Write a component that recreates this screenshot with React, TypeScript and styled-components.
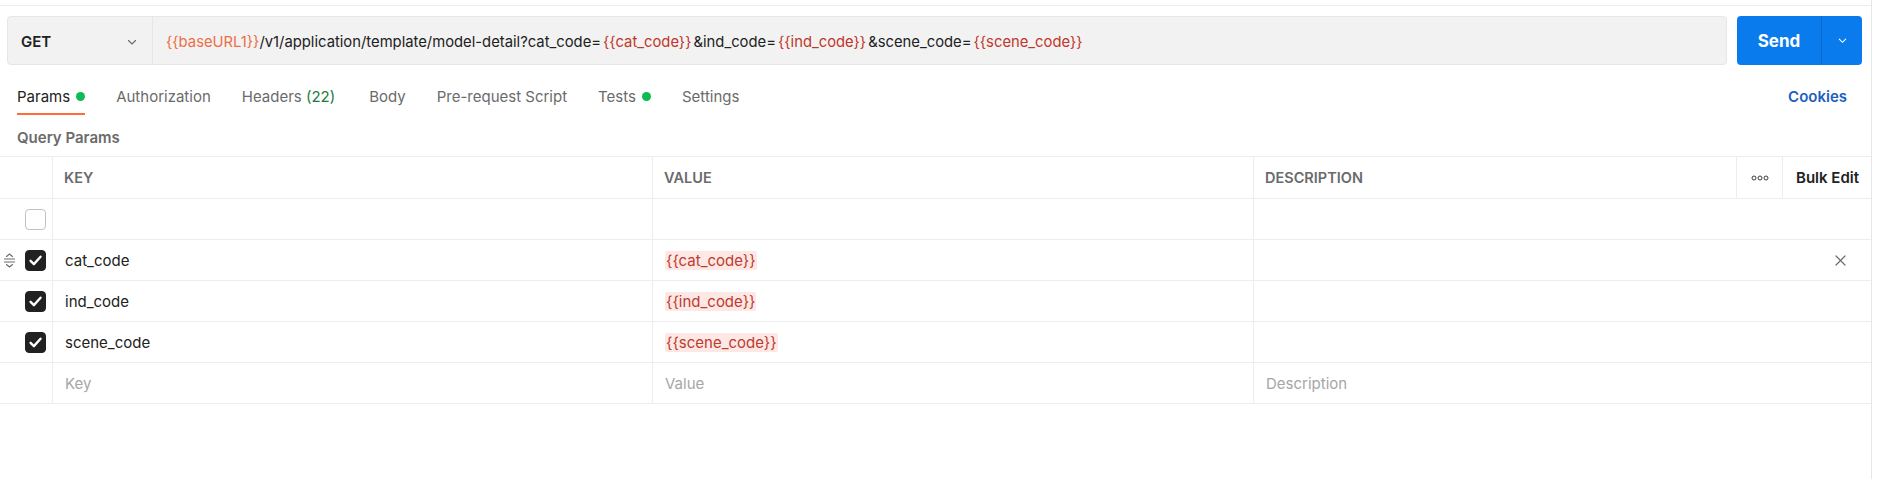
import React from "react";
import styled, { createGlobalStyle } from "styled-components";

const GlobalStyle = createGlobalStyle`
  html, body { margin: 0; padding: 0; background: #ffffff; }
  body { font-family: Inter, "Noto Sans", "Liberation Sans", sans-serif; color: #212121; }
  * { box-sizing: border-box; }
`;

const Page = styled.div`
  width: 1884px;
  height: 479px;
  display: flex;
  background: #fff;
`;

const Pane = styled.div`
  width: 1872px;
  height: 479px;
  border-right: 1px solid #e6e6e6;
  display: flex;
  flex-direction: column;
`;

const TopStrip = styled.div`
  height: 6px;
  border-bottom: 1px solid #ededed;
`;

const RequestBar = styled.div`
  display: flex;
  align-items: stretch;
  gap: 10px;
  padding: 10px 9px 0 7px;
  height: 59px;
`;

const UrlBox = styled.div`
  flex: 1;
  display: flex;
  background: #f2f2f2;
  border: 1px solid #e6e6e6;
  border-radius: 4px;
  overflow: hidden;
`;

const MethodSelect = styled.div`
  width: 145px;
  display: flex;
  align-items: center;
  justify-content: space-between;
  padding: 2px 14px 0 13px;
  border-right: 1px solid #e6e6e6;
  font-weight: 600;
  font-size: 15px;
  color: #212121;
`;

const UrlText = styled.div`
  flex: 1;
  display: flex;
  align-items: center;
  padding: 2px 0 0 13px;
  font-size: 14.8px;
  color: #212121;
  white-space: pre;
`;

const Var = styled.span<{ $tone: "orange" | "red" }>`
  color: ${(p) => (p.$tone === "orange" ? "#ec6f47" : "#c0362a")};
  margin: ${(p) => (p.$tone === "orange" ? "0" : "0 2px")};
`;

const SendButton = styled.div`
  width: 125px;
  display: flex;
  background: #097bed;
  border-radius: 4px;
  color: #fff;
  overflow: hidden;
`;

const SendLabel = styled.div`
  width: 85px;
  display: flex;
  align-items: center;
  justify-content: center;
  font-size: 17px;
  font-weight: 700;
  border-right: 1px solid #0a6ad1;
`;

const SendCaret = styled.div`
  flex: 1;
  display: flex;
  align-items: center;
  justify-content: center;
`;

const TabsRow = styled.div`
  display: flex;
  align-items: stretch;
  justify-content: space-between;
  padding: 0 24px 0 17px;
  height: 50px;
`;

const Tabs = styled.div`
  display: flex;
  gap: 31px;
  align-items: stretch;
`;

const Tab = styled.div<{ $active?: boolean; $wide?: boolean }>`
  display: flex;
  align-items: center;
  gap: 6px;
  padding-top: 14px;
  margin-right: ${(p) => (p.$wide ? "3px" : "0")};
  font-size: 15px;
  color: ${(p) => (p.$active ? "#212121" : "#6b6b6b")};
  border-bottom: 2px solid ${(p) => (p.$active ? "#ff6c37" : "transparent")};
`;

const Dot = styled.span`
  width: 9px;
  height: 9px;
  border-radius: 50%;
  background: #0cbb52;
`;

const Count = styled.span`
  color: #1e7b3c;
`;

const Cookies = styled.div`
  display: flex;
  align-items: center;
  padding-top: 14px;
  padding-bottom: 2px;
  font-size: 15px;
  font-weight: 600;
  color: #1d5fc0;
`;

const SectionLabel = styled.div`
  height: 41px;
  display: flex;
  align-items: center;
  padding: 3px 0 0 17px;
  font-size: 15px;
  font-weight: 600;
  color: #6b6b6b;
`;

const Table = styled.div`
  border-top: 1px solid #ededed;
`;

const HeadRow = styled.div`
  display: grid;
  grid-template-columns: 53px 600px 601px 1fr 46px 88px;
  height: 42px;
  border-bottom: 1px solid #ededed;
`;

const Row = styled.div`
  display: grid;
  grid-template-columns: 53px 600px 601px 1fr;
  height: 41px;
  border-bottom: 1px solid #ededed;
`;

const Cell = styled.div<{ $last?: boolean }>`
  display: flex;
  align-items: center;
  padding-left: 12px;
  border-right: ${(p) => (p.$last ? "none" : "1px solid #ededed")};
  font-size: 15px;
  color: #212121;
  min-width: 0;
`;

const HeadCell = styled(Cell)`
  font-size: 14.5px;
  font-weight: 600;
  color: #6b6b6b;
  text-transform: uppercase;
  padding-left: 11px;
`;

const IconCell = styled(Cell)`
  justify-content: center;
  padding-left: 0;
`;

const BulkCell = styled(Cell)`
  padding-left: 13px;
  font-size: 15px;
  font-weight: 600;
  color: #212121;
`;

const CheckCell = styled(Cell)`
  position: relative;
  padding-left: 25px;
`;

const DescCell = styled(Cell)`
  justify-content: space-between;
  padding-right: 25px;
`;

const Handle = styled.span`
  position: absolute;
  left: 3px;
  top: 13px;
  display: flex;
`;

const Box = styled.span<{ $checked?: boolean }>`
  width: 21px;
  height: 21px;
  border-radius: 4px;
  display: flex;
  align-items: center;
  justify-content: center;
  background: ${(p) => (p.$checked ? "#212121" : "#fff")};
  border: 1px solid ${(p) => (p.$checked ? "#212121" : "#c2c2c2")};
`;

const Chip = styled.span`
  background: #fde8e6;
  color: #bf3a2e;
  padding: 1px 1px;
  border-radius: 2px;
  line-height: 17px;
`;

const Placeholder = styled.span`
  color: #a6a6a6;
`;

const Chevron = ({ color, size }: { color: string; size: number }) => (
  <svg width={size} height={size} viewBox="0 0 12 12" fill="none">
    <path d="M2.5 4.5 L6 8 L9.5 4.5" stroke={color} strokeWidth="1.1" strokeLinecap="round" strokeLinejoin="round" />
  </svg>
);

const Check = () => (
  <svg width="15" height="15" viewBox="0 0 14 14" fill="none">
    <path d="M2.4 7.3 L5.5 10.4 L11.7 3.5" stroke="#fff" strokeWidth="2.2" strokeLinecap="round" strokeLinejoin="round" />
  </svg>
);

const DragIcon = () => (
  <svg width="13" height="15" viewBox="0 0 13 15" fill="none" stroke="#6b6b6b" strokeWidth="1.1" strokeLinecap="round" strokeLinejoin="round">
    <path d="M3.5 3.5 L6.5 1 L9.5 3.5" />
    <path d="M1.5 6 H11.5" />
    <path d="M1.5 9 H11.5" />
    <path d="M3.5 11.5 L6.5 14 L9.5 11.5" />
  </svg>
);

const DotsIcon = () => (
  <svg width="18" height="6" viewBox="0 0 18 6" fill="none" stroke="#3b3b3b" strokeWidth="1">
    <circle cx="3" cy="3" r="2" />
    <circle cx="9" cy="3" r="2" />
    <circle cx="15" cy="3" r="2" />
  </svg>
);

const XIcon = () => (
  <svg width="11" height="11" viewBox="0 0 11 11" fill="none" stroke="#6b6b6b" strokeWidth="1.2" strokeLinecap="round">
    <path d="M1 1 L10 10" />
    <path d="M10 1 L1 10" />
  </svg>
);

const params = [
  { key: "cat_code", value: "{{cat_code}}", handle: true, remove: true },
  { key: "ind_code", value: "{{ind_code}}" },
  { key: "scene_code", value: "{{scene_code}}" },
];

export default function App() {
  return (
    <Page>
      <GlobalStyle />
      <Pane>
        <TopStrip />
        <RequestBar>
          <UrlBox>
            <MethodSelect>
              GET
              <Chevron color="#6b6b6b" size={12} />
            </MethodSelect>
            <UrlText>
              <Var $tone="orange">{"{{baseURL1}}"}</Var>
              {"/v1/application/template/model-detail?cat_code="}
              <Var $tone="red">{"{{cat_code}}"}</Var>
              {"&ind_code="}
              <Var $tone="red">{"{{ind_code}}"}</Var>
              {"&scene_code="}
              <Var $tone="red">{"{{scene_code}}"}</Var>
            </UrlText>
          </UrlBox>
          <SendButton>
            <SendLabel>Send</SendLabel>
            <SendCaret>
              <Chevron color="#ffffff" size={11} />
            </SendCaret>
          </SendButton>
        </RequestBar>
        <TabsRow>
          <Tabs>
            <Tab $active>
              Params <Dot />
            </Tab>
            <Tab>Authorization</Tab>
            <Tab $wide>
              <span>
                Headers <Count>(22)</Count>
              </span>
            </Tab>
            <Tab>Body</Tab>
            <Tab>Pre-request Script</Tab>
            <Tab>
              Tests <Dot />
            </Tab>
            <Tab>Settings</Tab>
          </Tabs>
          <Cookies>Cookies</Cookies>
        </TabsRow>
        <SectionLabel>Query Params</SectionLabel>
        <Table>
          <HeadRow>
            <HeadCell />
            <HeadCell>Key</HeadCell>
            <HeadCell>Value</HeadCell>
            <HeadCell>Description</HeadCell>
            <IconCell>
              <DotsIcon />
            </IconCell>
            <BulkCell $last>Bulk Edit</BulkCell>
          </HeadRow>
          <Row>
            <CheckCell>
              <Box />
            </CheckCell>
            <Cell />
            <Cell />
            <Cell $last />
          </Row>
          {params.map((p) => (
            <Row key={p.key}>
              <CheckCell>
                {p.handle && (
                  <Handle>
                    <DragIcon />
                  </Handle>
                )}
                <Box $checked>
                  <Check />
                </Box>
              </CheckCell>
              <Cell>{p.key}</Cell>
              <Cell>
                <Chip>{p.value}</Chip>
              </Cell>
              <DescCell $last>
                <span />
                {p.remove && <XIcon />}
              </DescCell>
            </Row>
          ))}
          <Row>
            <CheckCell />
            <Cell>
              <Placeholder>Key</Placeholder>
            </Cell>
            <Cell>
              <Placeholder>Value</Placeholder>
            </Cell>
            <Cell $last>
              <Placeholder>Description</Placeholder>
            </Cell>
          </Row>
        </Table>
      </Pane>
    </Page>
  );
}
